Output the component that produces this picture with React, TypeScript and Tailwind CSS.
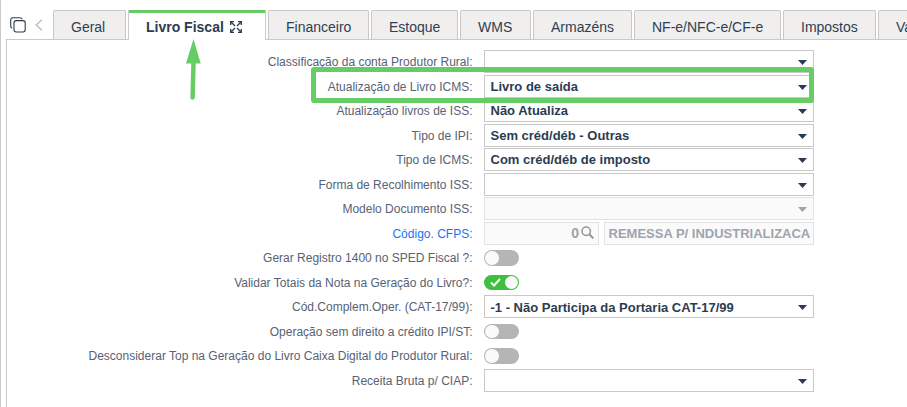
import type { ReactNode } from "react";

interface Tab {
  label: string;
  width: string;
  active?: boolean;
}

interface Field {
  label: string;
  kind: "select" | "toggle" | "lookup";
  value?: string;
  on?: boolean;
  disabled?: boolean;
  link?: boolean;
}

const tabs: Tab[] = [
  { label: "Geral", width: "w-[73px]" },
  { label: "Livro Fiscal", width: "w-[138px]", active: true },
  { label: "Financeiro", width: "w-[101px]" },
  { label: "Estoque", width: "w-[87px]" },
  { label: "WMS", width: "w-[71px]" },
  { label: "Armazéns", width: "w-[99px]" },
  { label: "NF-e/NFC-e/CF-e", width: "w-[147px]" },
  { label: "Impostos", width: "w-[93px]" },
  { label: "Va", width: "w-[53px]" },
];

const fields: Field[] = [
  { label: "Classificação da conta Produtor Rural:", kind: "select" },
  { label: "Atualização de Livro ICMS:", kind: "select", value: "Livro de saída" },
  { label: "Atualização livros de ISS:", kind: "select", value: "Não Atualiza" },
  { label: "Tipo de IPI:", kind: "select", value: "Sem créd/déb - Outras" },
  { label: "Tipo de ICMS:", kind: "select", value: "Com créd/déb de imposto" },
  { label: "Forma de Recolhimento ISS:", kind: "select" },
  { label: "Modelo Documento ISS:", kind: "select", disabled: true },
  { label: "Código. CFPS:", kind: "lookup", link: true },
  { label: "Gerar Registro 1400 no SPED Fiscal ?:", kind: "toggle" },
  { label: "Validar Totais da Nota na Geração do Livro?:", kind: "toggle", on: true },
  { label: "Cód.Complem.Oper. (CAT-17/99):", kind: "select", value: "-1 - Não Participa da Portaria CAT-17/99" },
  { label: "Operação sem direito a crédito IPI/ST:", kind: "toggle" },
  { label: "Desconsiderar Top na Geração do Livro Caixa Digital do Produtor Rural:", kind: "toggle" },
  { label: "Receita Bruta p/ CIAP:", kind: "select" },
];

function ExpandIcon() {
  return (
    <svg className="ml-[6px] size-[12px] shrink-0" viewBox="0 0 12 12" fill="none" stroke="#2b3c52" strokeWidth="1.3">
      <path d="M.7 4V.7H4M8 .7h3.3V4M11.3 8v3.3H8M4 11.3H.7V8" />
      <path d="M1 1l4 4M11 1L7 5M11 11L7 7M1 11l4-4" />
    </svg>
  );
}

function TabItem({ tab }: { tab: Tab }) {
  if (tab.active) {
    return (
      <div className={`${tab.width} flex h-[30px] shrink-0 flex-col border-x border-[#c9c9c9] bg-white`}>
        <div className="h-[3px] shrink-0 bg-[#66cd66]" />
        <div className="flex h-[27px] items-center pt-px pl-[17px] text-sm font-bold whitespace-nowrap text-[#2b3c52]">
          {tab.label}
          <ExpandIcon />
        </div>
      </div>
    );
  }
  return (
    <div
      className={`${tab.width} flex h-[29px] shrink-0 items-center rounded-t-xs border border-b-0 border-[#c9c7c7] bg-[#f0efee] pt-[4px] pl-[17px] text-sm whitespace-nowrap text-[#2f3e53]`}
    >
      {tab.label}
    </div>
  );
}

function Box({ disabled, className, children }: { disabled?: boolean; className: string; children?: ReactNode }) {
  return (
    <div
      className={`${className} flex h-[23px] shrink-0 items-center overflow-hidden border text-[13px] font-bold whitespace-nowrap ${
        disabled ? "border-[#e2e2e2] bg-[#fafafa] text-[#9da4ae]" : "border-[#c8c8c8] bg-white text-[#2b3c52]"
      }`}
    >
      {children}
    </div>
  );
}

function Select({ value, disabled }: { value?: string; disabled?: boolean }) {
  return (
    <Box disabled={disabled} className="w-[330px] justify-between pr-[6px] pl-[5.5px]">
      <span className="pt-px">{value}</span>
      <svg className="mt-[2px] h-[5px] w-[9px]" viewBox="0 0 9 5">
        <path d="M0 0h9L4.5 5z" fill={disabled ? "#9da4ae" : "#2b3c52"} />
      </svg>
    </Box>
  );
}

function Toggle({ on }: { on?: boolean }) {
  return (
    <div
      className={`mt-[4px] flex h-[15.5px] w-[35px] items-center rounded-full p-px ${
        on ? "justify-end bg-[#3fbf3f]" : "bg-[#b5b5b5]"
      }`}
    >
      {on && (
        <svg className="mr-[4px] h-[9px] w-[11px]" viewBox="0 0 11 9" fill="none" stroke="#fff" strokeWidth="2">
          <path d="M1 4.5l3 3L10 1" />
        </svg>
      )}
      <div className="size-[13.5px] rounded-full bg-[#fafafa]" />
    </div>
  );
}

function Lookup() {
  return (
    <div className="flex gap-[5px]">
      <Box disabled className="w-[115px] justify-end pr-[4px]">
        <span className="text-sm">0</span>
        <svg className="mb-[2px] ml-[2px] size-[13px]" viewBox="0 0 13 13" fill="none" stroke="#999">
          <circle cx="5.2" cy="5.2" r="4.2" strokeWidth="1.6" />
          <path d="M8.3 8.3l4 4" strokeWidth="2.2" />
        </svg>
      </Box>
      <Box disabled className="w-[210px] pl-[3.5px]">
        <span className="pt-px">REMESSA P/ INDUSTRIALIZACA</span>
      </Box>
    </div>
  );
}

function FieldRow({ field }: { field: Field }) {
  return (
    <div className="flex h-[24.54px] shrink-0 items-start gap-[12px]">
      <div
        className={`w-[465.5px] -mr-[0.5px] pt-[3px] text-right text-xs leading-[18px] whitespace-nowrap ${
          field.link ? "text-[#1a73f5]" : "text-[#576274]"
        }`}
      >
        {field.label}
      </div>
      {field.kind === "select" && <Select value={field.value} disabled={field.disabled} />}
      {field.kind === "toggle" && <Toggle on={field.on} />}
      {field.kind === "lookup" && <Lookup />}
    </div>
  );
}

export default function App() {
  return (
    <div className="relative flex h-[407px] w-[907px] flex-col overflow-hidden border-l border-[#c9c9c9] bg-white font-['Liberation_Sans',Arial,sans-serif]">
      {/* Tab strip */}
      <div className="relative z-10 flex h-10 shrink-0 items-start pt-[10px]">
        <svg className="mt-[7px] ml-[9px] size-4 shrink-0" viewBox="0 0 16 16" fill="none" stroke="#2b3c52" strokeWidth="1.1">
          <rect x="4" y="3.6" width="11.2" height="11.4" rx="2.2" />
          <path d="M2.200 11.200C1.200 10.800.7 10.200.7 9V3C.7 1.5 1.5.7 3 .7h7c1.200 0 1.800.5 2.200 1.500" />
        </svg>
        <svg className="mt-[9px] ml-[9px] h-[12px] w-[8px] shrink-0" viewBox="0 0 8 12" fill="none" stroke="#c4c4c4" strokeWidth="1.6">
          <path d="M6.800.8L1.200 6l5.600 5.200" />
        </svg>
        <div className="ml-[10px] flex gap-[2px]">
          {tabs.map((tab) => (
            <TabItem key={tab.label} tab={tab} />
          ))}
        </div>
      </div>

      {/* Form panel */}
      <div className="-mt-px ml-[5px] flex w-[905px] grow flex-col border-t border-l border-[#c9c9c9] pt-[10px]">
        {fields.map((field) => (
          <FieldRow key={field.label} field={field} />
        ))}
      </div>

      {/* Callouts over the form */}
      <div className="absolute top-[67px] left-[310px] z-20 h-[36px] w-[503px] rounded-[3px] border-[5px] border-[#66cd66]" />
      <svg className="absolute top-[39px] left-[184px] z-20 h-[62px] w-[17px]" viewBox="0 0 17 62" fill="#66cd66">
        <path d="M8.500 0L15.700 24.500H1z" />
        <path d="M8.600 20L7.600 58.500" stroke="#66cd66" strokeWidth="4.500" strokeLinecap="round" />
      </svg>
    </div>
  );
}
